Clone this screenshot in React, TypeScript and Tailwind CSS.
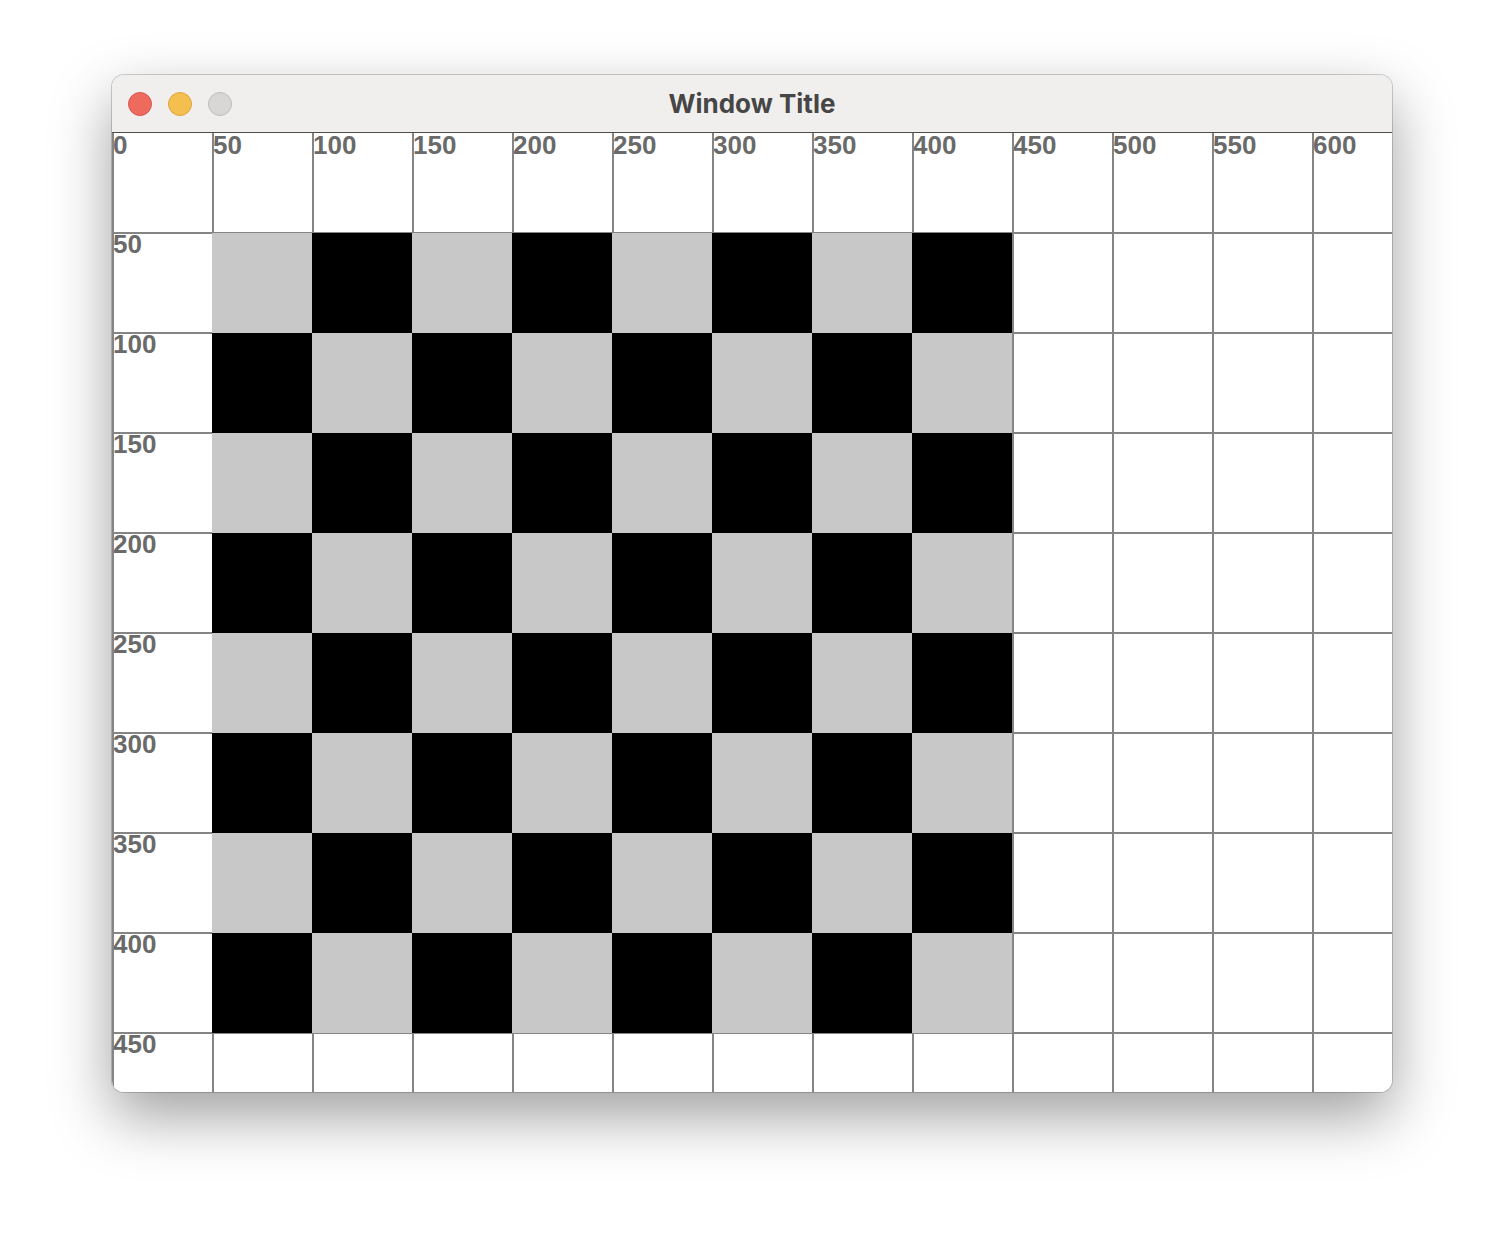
import React from "react";

const W = 1280;
const H = 959;

export default function App() {
  const vLines = Array.from({ length: 13 }, (_, i) => i * 100);
  const hLines = Array.from({ length: 10 }, (_, i) => i * 100);
  const cells: { x: number; y: number; dark: boolean }[] = [];
  for (let r = 0; r < 8; r++) {
    for (let c = 0; c < 8; c++) {
      cells.push({ x: 100 + c * 100, y: 100 + r * 100, dark: (r + c) % 2 === 1 });
    }
  }
  const labelFont = { fontFamily: '"Liberation Sans", Arial, sans-serif' };
  return (
    <div className="min-h-[1240px] w-[1504px] bg-white pt-[75px] pl-[112px]">
      <div className="w-[1280px] h-[1017px] rounded-[12px] overflow-hidden bg-white flex flex-col shadow-[0_0_0_1px_rgba(0,0,0,0.18),0_24px_60px_rgba(0,0,0,0.38)]">
        <div className="relative h-[58px] shrink-0 bg-[#f0efee] border-b border-[#4d4d4d] flex items-center pl-[16px] gap-[16px]">
          <div className="w-[24px] h-[24px] rounded-full bg-[#ee6a5f] border border-[#d9574c]" />
          <div className="w-[24px] h-[24px] rounded-full bg-[#f5bf4f] border border-[#dca53a]" />
          <div className="w-[24px] h-[24px] rounded-full bg-[#d8d7d5] border border-[#bdbcbb]" />
          <div
            className="absolute inset-0 flex items-center justify-center text-[26px] font-bold text-[#464646] pointer-events-none"
            style={{ fontFamily: 'Inter, "Noto Sans", sans-serif' }}
          >
            Window Title
          </div>
        </div>
        <div className="flex-1 bg-white">
          <svg width={W} height={H} viewBox={`0 0 ${W} ${H}`} className="block">
            {vLines.map((x) => (
              <text
                key={`cl-${x}`}
                x={x + 1}
                y={21}
                fill="#6a6a6a"
                fontSize={26}
                fontWeight={700}
                style={labelFont}
              >
                {x / 2}
              </text>
            ))}
            {hLines.slice(1).map((y) => (
              <text
                key={`rl-${y}`}
                x={1}
                y={y + 20}
                fill="#6a6a6a"
                fontSize={26}
                fontWeight={700}
                style={labelFont}
              >
                {y / 2}
              </text>
            ))}
            {vLines.map((x) => (
              <rect key={`v-${x}`} x={x} y={0} width={2} height={H} fill="#858585" />
            ))}
            {hLines.slice(1).map((y) => (
              <rect key={`h-${y}`} x={0} y={y - 1} width={W} height={2} fill="#858585" />
            ))}
            {cells.map((c) => (
              <rect
                key={`c-${c.x}-${c.y}`}
                x={c.x}
                y={c.y}
                width={100}
                height={100}
                fill={c.dark ? "#000000" : "#c8c8c8"}
              />
            ))}
          </svg>
        </div>
      </div>
    </div>
  );
}
